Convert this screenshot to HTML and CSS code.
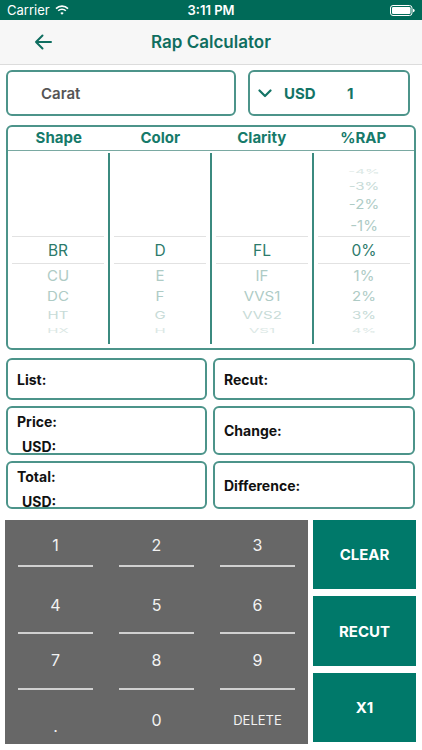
FILE: index.html
```html
<!DOCTYPE html>
<html>
<head>
<meta charset="utf-8">
<link rel="stylesheet" href="styles.css">
</head>
<body>
<div class="status">
  <div class="st-left">Carrier
    <svg class="wifi" width="14" height="10" viewBox="0 0 14 10"><path d="M1 3.6 A8.5 8.5 0 0 1 13 3.6" fill="none" stroke="#fff" stroke-width="1.6"/><path d="M3.2 5.8 A5.4 5.4 0 0 1 10.8 5.8" fill="none" stroke="#fff" stroke-width="1.6"/><path d="M5.3 8 L7 9.8 L8.7 8 A2.4 2.4 0 0 0 5.3 8 Z" fill="#fff"/></svg>
  </div>
  <div class="st-time">3:11 PM</div>
  <div class="st-right">
    <svg width="25" height="11" viewBox="0 0 25 11"><rect x="0.5" y="0.5" width="21.5" height="10" rx="2.5" fill="none" stroke="#fff" stroke-width="1"/><rect x="2" y="2" width="18.5" height="7" rx="1.3" fill="#fff"/><path d="M23 3.8 v3.4 a1.5 1.5 0 0 0 0 -3.4z" fill="#fff"/></svg>
  </div>
</div>
<div class="nav">
  <svg class="back" width="18" height="16" viewBox="0 0 18 16"><path d="M17 8 H2 M8.5 1.5 L2 8 L8.5 14.5" fill="none" stroke="#0f6e60" stroke-width="2" stroke-linecap="round" stroke-linejoin="round"/></svg>
  <div class="title">Rap Calculator</div>
</div>
<div class="main">
  <div class="top-row">
    <div class="box carat">Carat</div>
    <div class="box usd">
      <svg class="chev" width="14" height="9" viewBox="0 0 14 9"><path d="M1.5 1.5 L7 7 L12.5 1.5" fill="none" stroke="#137466" stroke-width="2.2" stroke-linecap="round" stroke-linejoin="round"/></svg>
      <span class="usd-l">USD</span>
      <span class="usd-v">1</span>
    </div>
  </div>

  <div class="table">
    <div class="thead">
      <div>Shape</div><div>Color</div><div>Clarity</div><div>%RAP</div>
    </div>
    <div class="tbody">
      <div class="col">
        <div class="it s4"></div><div class="it s3"></div><div class="it s2"></div><div class="it s1"></div>
        <div class="it sel"><span>BR</span></div>
        <div class="it a1"><span>CU</span></div>
        <div class="it a2"><span>DC</span></div>
        <div class="it a3"><span>HT</span></div>
        <div class="it a4"><span>HX</span></div>
      </div>
      <div class="col sep">
        <div class="it s4"></div><div class="it s3"></div><div class="it s2"></div><div class="it s1"></div>
        <div class="it sel"><span>D</span></div>
        <div class="it a1"><span>E</span></div>
        <div class="it a2"><span>F</span></div>
        <div class="it a3"><span>G</span></div>
        <div class="it a4"><span>H</span></div>
      </div>
      <div class="col sep">
        <div class="it s4"></div><div class="it s3"></div><div class="it s2"></div><div class="it s1"></div>
        <div class="it sel"><span>FL</span></div>
        <div class="it a1"><span>IF</span></div>
        <div class="it a2"><span>VVS1</span></div>
        <div class="it a3"><span>VVS2</span></div>
        <div class="it a4"><span>VS1</span></div>
      </div>
      <div class="col sep">
        <div class="it s4"><span>-4%</span></div>
        <div class="it s3"><span>-3%</span></div>
        <div class="it s2"><span>-2%</span></div>
        <div class="it s1"><span>-1%</span></div>
        <div class="it sel"><span>0%</span></div>
        <div class="it a1"><span>1%</span></div>
        <div class="it a2"><span>2%</span></div>
        <div class="it a3"><span>3%</span></div>
        <div class="it a4"><span>4%</span></div>
      </div>
    </div>
  </div>

  <div class="results">
    <div class="box res r-list"><div class="lbl">List:</div></div>
    <div class="box res r-list"><div class="lbl">Recut:</div></div>
    <div class="box res r-two"><div class="lbl">Price:</div><div class="lbl sub">USD:</div></div>
    <div class="box res r-mid"><div class="lbl">Change:</div></div>
    <div class="box res r-two"><div class="lbl">Total:</div><div class="lbl sub">USD:</div></div>
    <div class="box res r-mid"><div class="lbl">Difference:</div></div>
  </div>

  <div class="pad-row">
    <div class="keypad">
      <div class="key k1"><span>1</span><i></i></div>
      <div class="key k1"><span>2</span><i></i></div>
      <div class="key k1"><span>3</span><i></i></div>
      <div class="key k2"><span>4</span><i></i></div>
      <div class="key k2"><span>5</span><i></i></div>
      <div class="key k2"><span>6</span><i></i></div>
      <div class="key k3"><span>7</span><i></i></div>
      <div class="key k3"><span>8</span><i></i></div>
      <div class="key k3"><span>9</span><i></i></div>
      <div class="key k4 dot"><span>.</span></div>
      <div class="key k4"><span>0</span></div>
      <div class="key k4 del"><span>DELETE</span></div>
    </div>
    <div class="actions">
      <div class="act a-clear">CLEAR</div>
      <div class="act a-recut">RECUT</div>
      <div class="act a-x1">X1</div>
    </div>
  </div>
</div>
</body>
</html>
```

FILE: styles.css
```css
* { box-sizing: border-box; }
html, body { margin: 0; padding: 0; }
body {
  width: 422px;
  height: 750px;
  overflow: hidden;
  background: #ffffff;
  font-family: "Inter", "Liberation Sans", sans-serif;
  color: #111;
}

/* status bar */
.status {
  height: 20px;
  background: #006a58;
  color: #fff;
  display: flex;
  align-items: center;
  justify-content: space-between;
  padding: 0 7px 0 7px;
  font-size: 13px;
  position: relative;
}
.st-left { display: flex; align-items: center; gap: 5px; }
.wifi { margin-top: -1px; }
.st-time {
  position: absolute;
  left: 0; right: 0;
  text-align: center;
  font-weight: 600;
  pointer-events: none;
}
.st-right { display: flex; align-items: center; }

/* nav */
.nav {
  height: 45px;
  background: #f7f7f7;
  border-bottom: 1px solid #dcdcdc;
  display: flex;
  align-items: center;
  position: relative;
  padding-left: 34px;
}
.title {
  position: absolute;
  left: 0; right: 0;
  text-align: center;
  font-size: 17px;
  font-weight: 600;
  color: #0f6e60;
}

.main { padding: 5px 6px 0 6px; }

.box {
  border: 2px solid #4c948a;
  border-radius: 6px;
  background: #fff;
}

/* top row */
.top-row { display: flex; gap: 12px; }
.carat {
  width: 230px;
  height: 46px;
  display: flex;
  align-items: center;
  padding-left: 33px;
  font-size: 15px;
  font-weight: 600;
  color: #555;
}
.usd {
  width: 162px;
  height: 46px;
  display: flex;
  align-items: center;
  padding-left: 8px;
  color: #137466;
  font-weight: 700;
  font-size: 15px;
}
.chev { margin-right: 12px; }
.usd-l { width: 63px; }

/* picker table */
.table {
  margin-top: 9px;
  width: 410px;
  height: 225px;
  border: 2px solid #4c948a;
  border-radius: 6px;
  display: flex;
  flex-direction: column;
}
.thead {
  height: 24px;
  display: flex;
  border-bottom: 1px solid #7aa9a2;
  font-size: 15px;
  font-weight: 700;
  color: #167a6a;
}
.thead div { flex: 1; text-align: center; line-height: 22px; }
.tbody {
  flex: 1;
  display: flex;
  padding: 2px 0 4px 0;
}
.col {
  flex: 1;
  padding-top: 12px;
  display: flex;
  flex-direction: column;
}
.col.sep { border-left: 2px solid #3b8a7f; }
.it {
  display: flex;
  align-items: center;
  justify-content: center;
  font-size: 15px;
  color: #aecbc5;
  overflow: hidden;
}
.it span { display: inline-block; }
.s4 { height: 13px; }
.s4 span { transform: scaleY(0.45); color: #dbe8e5; }
.s3 { height: 16px; }
.s3 span { transform: scaleY(0.7); color: #c7dbd7; }
.s2 { height: 20px; }
.s2 span { transform: scaleY(0.86); }
.s1 { height: 22px; }
.s1 span { transform: scaleY(0.95); }
.sel {
  height: 28px;
  margin: 0 4px;
  border-top: 1px solid #e2e2e2;
  border-bottom: 1px solid #e2e2e2;
  color: #2c7a6b;
  font-size: 15.5px;
}
.a1 { height: 22px; }
.a1 span { transform: scaleY(0.95); }
.a2 { height: 21px; }
.a2 span { transform: scaleY(0.86); }
.a3 { height: 17px; }
.a3 span { transform: scaleY(0.68); color: #c7dbd7; }
.a4 { height: 13px; }
.a4 span { transform: scaleY(0.45); color: #dbe8e5; }

/* results */
.results {
  margin-top: 8px;
  display: grid;
  grid-template-columns: 201px 202px;
  grid-template-rows: 42px 49px 48px;
  column-gap: 6px;
  row-gap: 6px;
}
.res {
  padding-left: 9px;
  display: flex;
  flex-direction: column;
  justify-content: center;
}
.lbl { font-size: 14px; font-weight: 700; color: #111; }
.r-two { justify-content: flex-start; padding-top: 5px; }
.r-two .sub { margin-top: 8px; margin-left: 5px; }

/* keypad */
.pad-row {
  margin-top: 11px;
  margin-left: -1px;
  display: flex;
  gap: 5px;
}
.keypad {
  width: 303px;
  height: 224px;
  background: #676767;
  display: grid;
  grid-template-columns: repeat(3, 1fr);
  grid-template-rows: 47px 67px 56px 54px;
}
.key {
  display: flex;
  flex-direction: column;
  align-items: center;
  justify-content: flex-end;
  color: #f2f2f2;
  font-size: 16px;
}
.key span { line-height: 20px; }
.key i {
  display: block;
  width: 75px;
  height: 2px;
  background: #d0d0d0;
}
.k1 i { margin-top: 10px; }
.k2 i { margin-top: 17px; }
.k3 i { margin-top: 18px; }
.k4 { padding-bottom: 14px; }
.dot { padding-bottom: 8px; }
.del span { font-size: 13px; }

.actions {
  width: 103px;
  display: flex;
  flex-direction: column;
  gap: 7px;
}
.act {
  background: #00796a;
  color: #fff;
  font-weight: 700;
  font-size: 15px;
  display: flex;
  align-items: center;
  justify-content: center;
}
.a-clear { height: 69px; }
.a-recut { height: 70px; }
.a-x1 { height: 69px; }
```
